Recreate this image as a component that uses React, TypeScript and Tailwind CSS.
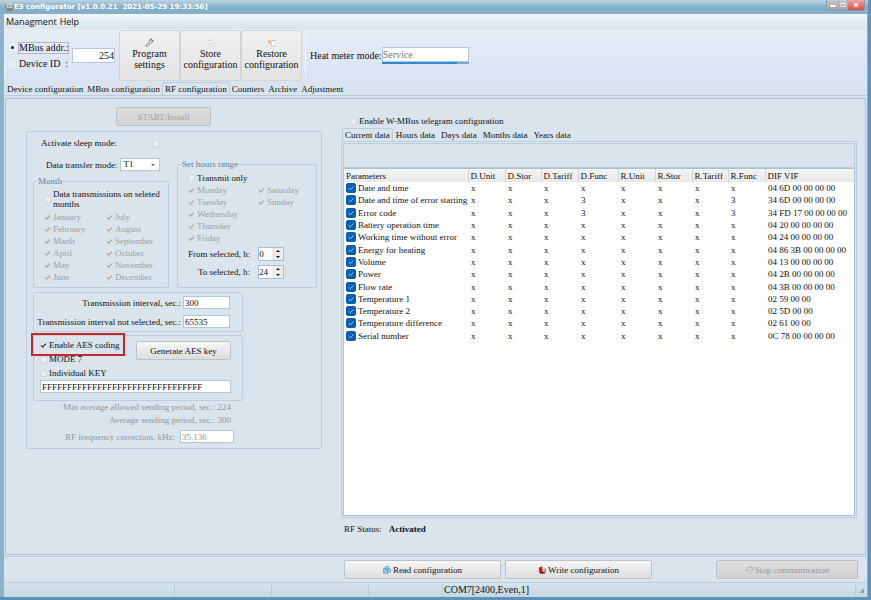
import React from "react";

const monthsLeft = ["January", "February", "Marth", "April", "May", "June"];
const monthsRight = [
  "July",
  "August",
  "September",
  "October",
  "November",
  "December",
];
const weekDays = ["Monday", "Tuesday", "Wednesday", "Thursday", "Friday"];
const weekend = ["Saturday", "Sunday"];

const columns = [
  { name: "Parameters", width: "w-[124px]" },
  { name: "D.Unit", width: "w-[37px]" },
  { name: "D.Stor", width: "w-[36px]" },
  { name: "D.Tariff", width: "w-[37px]" },
  { name: "D.Func", width: "w-[40px]" },
  { name: "R.Unit", width: "w-[37px]" },
  { name: "R.Stor", width: "w-[37px]" },
  { name: "R.Tariff", width: "w-[36px]" },
  { name: "R.Func", width: "w-[37px]" },
  { name: "DIF VIF", width: "" },
];

const parameters = [
  { name: "Date and time", func: "x", dif: "04 6D 00 00 00 00" },
  { name: "Date and time of error starting", func: "3", dif: "34 6D 00 00 00 00" },
  { name: "Error code", func: "3", dif: "34 FD 17 00 00 00 00" },
  { name: "Battery operation time", func: "x", dif: "04 20 00 00 00 00" },
  { name: "Working time without error", func: "x", dif: "04 24 00 00 00 00" },
  { name: "Energy for heating", func: "x", dif: "04 86 3B 00 00 00 00" },
  { name: "Volume", func: "x", dif: "04 13 00 00 00 00" },
  { name: "Power", func: "x", dif: "04 2B 00 00 00 00" },
  { name: "Flow rate", func: "x", dif: "04 3B 00 00 00 00" },
  { name: "Temperature 1", func: "x", dif: "02 59 00 00" },
  { name: "Temperature 2", func: "x", dif: "02 5D 00 00" },
  { name: "Temperature difference", func: "x", dif: "02 61 00 00" },
  { name: "Serial number", func: "x", dif: "0C 78 00 00 00 00" },
];

function Check({ label, checked, disabled, hideLabel }: any) {
  return (
    <label
      className={
        disabled
          ? "flex items-center gap-[2px] text-[#999fa3]"
          : "flex items-center gap-[2px]"
      }
    >
      <span className="grid shrink-0">
        <input
          type="checkbox"
          defaultChecked={checked}
          disabled={disabled}
          aria-label={hideLabel ? label : undefined}
          className="peer col-start-1 row-start-1 size-[7px] appearance-none rounded-[2px] border border-[#d6d8d9] bg-[#eeeeee] disabled:border-[#dcdfe1] disabled:bg-[#e2e1df]"
        />
        <svg
          viewBox="0 0 7 7"
          className="pointer-events-none invisible col-start-1 row-start-1 size-[7px] peer-checked:visible"
          fill="none"
          stroke={disabled ? "#aaa6a2" : "#222222"}
          strokeWidth="1.2"
        >
          <path d="M1.2 3.4 L2.8 5.2 L5.8 1.6" />
        </svg>
      </span>
      {!hideLabel && <span>{label}</span>}
    </label>
  );
}

function ParamCheck({ label }: any) {
  return (
    <label className="flex items-center gap-[2px]">
      <span className="grid shrink-0">
        <input
          type="checkbox"
          defaultChecked
          className="peer col-start-1 row-start-1 size-[10px] appearance-none rounded-[2px] border border-[#0a5cae] checked:bg-[#0560b8]"
        />
        <svg
          viewBox="0 0 10 10"
          className="pointer-events-none invisible col-start-1 row-start-1 size-[10px] peer-checked:visible"
          fill="none"
          stroke="#a9d2f5"
          strokeWidth="0.9"
        >
          <path d="M2.6 5.1 L4.3 6.7 L7.5 3.5" />
        </svg>
      </span>
      <span>{label}</span>
    </label>
  );
}

function Spinner({ id, value }: any) {
  return (
    <span className="flex h-[14px] w-[26px] border border-[#a9bfcd] bg-white">
      <input
        id={id}
        defaultValue={value}
        className="w-[13px] min-w-0 text-[9px] leading-[12px] outline-none"
      />
      <span className="flex flex-1 flex-col bg-[#ececec]">
        <button type="button" aria-label="Increase" className="grid h-[6px] place-items-center">
          <svg viewBox="0 0 4 2" className="h-[2px] w-[4px]">
            <path d="M0 2 L2 0 L4 2Z" fill="#111" />
          </svg>
        </button>
        <button type="button" aria-label="Decrease" className="grid h-[6px] place-items-center">
          <svg viewBox="0 0 4 2" className="h-[2px] w-[4px]">
            <path d="M0 0 L2 2 L4 0Z" fill="#111" />
          </svg>
        </button>
      </span>
    </span>
  );
}

function TitleBar() {
  return (
    <header className="flex h-[14px] items-start justify-between bg-linear-to-b from-[#bcd3e2] via-[#86b0ca] to-[#85aec9] pl-[5px] pr-[3px]">
      <div className="flex h-[14px] items-center">
        <svg viewBox="0 0 9 10" className="h-[10px] w-[9px]">
          <path d="M0.5 2h8v5l-1.5 2.5h-5L0.5 7z" fill="#8a8f92" />
          <path d="M1 0.8h7l0.5 2h-8z" fill="#c9cdd0" />
          <rect x="2" y="3" width="5" height="3" fill="#d5d8da" />
          <rect x="3" y="3.8" width="3" height="1" fill="#777" />
          <circle cx="4.5" cy="7.6" r="1" fill="#a3625c" />
        </svg>
        <h1 className="whitespace-pre font-['DejaVu_Sans'] text-[7px] font-bold leading-[14px] text-white">
          {"E3 configurator [v1.0.0.21  2021-05-29 19:33:56]"}
        </h1>
      </div>
      <div className="flex h-[11px] overflow-hidden rounded-b-[2px] border-x border-b border-[#8d9aa5]">
        <button type="button" aria-label="Minimize" className="grid w-[11px] place-items-center bg-linear-to-b from-[#c9cdd0] to-[#9c9fa2]">
          <svg viewBox="0 0 6 6" className="size-[6px]">
            <rect x="0.5" y="3" width="5" height="2" fill="#fff" />
          </svg>
        </button>
        <button type="button" aria-label="Maximize" className="grid w-[10px] place-items-center border-x border-[#a9afb4] bg-linear-to-b from-[#c9cdd0] to-[#9c9fa2]">
          <svg viewBox="0 0 6 6" className="size-[6px]">
            <rect x="1" y="1.5" width="4" height="3" fill="none" stroke="#e9eaeb" />
          </svg>
        </button>
        <button type="button" aria-label="Close" className="grid w-[16px] place-items-center bg-linear-to-b from-[#e9a3a3] to-[#d9484a]">
          <svg viewBox="0 0 6 6" className="size-[6px]" stroke="#fff" strokeWidth="1.4">
            <path d="M1.2 1.4 L4.8 4.8 M4.8 1.4 L1.2 4.8" />
          </svg>
        </button>
      </div>
    </header>
  );
}

function ToolButton({ icon, first, second }: any) {
  return (
    <button
      type="button"
      className="flex h-[51px] w-[61px] flex-col items-center rounded-[2px] border border-[#d0d4d8] bg-linear-to-b from-[#f1f1f1] to-[#e3e3e3] pt-[7px] text-[10px] leading-[11px]"
    >
      {icon}
      <span>{first}</span>
      <span>{second}</span>
    </button>
  );
}

function Toolbar() {
  return (
    <div className="flex h-[53px] items-center bg-linear-to-b from-[#e6edf4] via-[#dfe7f4] to-[#d8e4f4] text-[10px] leading-[12px]">
      <div className="flex h-[49px] w-[115px] items-center gap-[3px] border-l border-[#eef3f8] pl-[4px]">
        <div className="flex flex-col gap-[4px]">
          <label className="flex items-center gap-[2px]">
            <input
              type="radio"
              name="address"
              defaultChecked
              className="size-[7px] appearance-none rounded-full border-2 border-[#eeeeee] bg-[#eeeeee] checked:bg-[#222222]"
            />
            <span className="w-[51px] border border-[#b5b3cf] whitespace-pre leading-[10px]">MBus addr.:</span>
          </label>
          <label className="flex items-center gap-[3px]">
            <input
              type="radio"
              name="address"
              className="size-[7px] appearance-none rounded-full border-2 border-[#eeeeee] bg-[#e6e8ea] checked:bg-[#222222]"
            />
            <span className="whitespace-pre">{"Device ID  :"}</span>
          </label>
        </div>
        <input
          aria-label="MBus address"
          defaultValue="254"
          className="h-[15px] w-[43px] shrink-0 border border-[#b5c8d6] bg-white text-right text-[10px] outline-none"
        />
      </div>
      <ToolButton
        first="Program"
        second="settings"
        icon={
          <svg viewBox="0 0 10 10" className="mb-px size-[9px]" fill="none" stroke="#777" strokeWidth="1">
            <path d="M1 8 L5 4.2 Q4.6 2 6.4 1 L7.6 0.8 L6.6 2.4 L7.6 3.4 L9.2 2.4 Q9.2 5 6.6 5.4 L2.4 9.2 Q1 9.2 1 8Z" />
          </svg>
        }
      />
      <ToolButton
        first="Store"
        second="configuration"
        icon={
          <svg viewBox="0 0 10 10" className="mb-px size-[9px]" fill="none" strokeWidth="0.8">
            <path d="M2.5 2.5h5l1 1.5V9h-6z" fill="#f8f8f8" stroke="#dadcda" />
            <path d="M4 5.6h3.4M4 7.2h3.4" stroke="#c5d3c3" />
            <path d="M2.8 2.6h3.6" stroke="#a9d3a2" strokeWidth="1" />
          </svg>
        }
      />
      <ToolButton
        first="Restore"
        second="configuration"
        icon={
          <svg viewBox="0 0 10 10" className="mb-px size-[9px]" fill="none" strokeWidth="0.8">
            <path d="M4.8 3h3l1.2 1.2V9H4.8z" fill="#fafafa" stroke="#cfcfcf" />
            <path d="M0.8 2.8 L4.6 3.4 L3 6.4Z" fill="#efa04c" />
            <path d="M2.8 5.2 L5 8" stroke="#efa04c" />
            <path d="M6.2 2.8h2.4" stroke="#cf8a72" />
          </svg>
        }
      />
      <div className="ml-[3px] flex h-[49px] items-center border-l border-[#f3f6fa] pl-[4px]">
        <label htmlFor="mode">Heat meter mode:</label>
        <div className="flex w-[87px] flex-col">
          <input
            id="mode"
            defaultValue="Service"
            className="h-[15px] border border-[#b5c8d6] bg-white text-[10px] text-[#777777] outline-none"
          />
          <div className="h-[2px] bg-[#7fabcb]">
            <div className="h-[2px] w-[75px] bg-[#2f8bd2]" />
          </div>
        </div>
      </div>
    </div>
  );
}

function Tabs({ items, active, dense }: any) {
  return (
    <nav className="flex" role="tablist">
      {items.map((item: string) => (
        <button
          key={item}
          type="button"
          role="tab"
          aria-selected={item === active}
          className={
            item === active
              ? "-mb-px h-[14px] rounded-t-[2px] border border-b-0 border-[#b9cedc] bg-[#d9e4ec] px-[2px] pb-[2px]"
              : dense
                ? "h-[13px] px-[2px]"
                : "h-[13px] px-[3px]"
          }
        >
          {item}
        </button>
      ))}
    </nav>
  );
}

function TextField({ id, value, className, label }: any) {
  return (
    <input
      id={id}
      aria-label={label}
      defaultValue={value}
      className={
        "h-[13px] border border-[#b2c8d6] bg-white pl-px text-[9px] leading-[11px] outline-none " +
        className
      }
    />
  );
}

function MonthGroup() {
  return (
    <fieldset className="mt-[4px] h-[113px] rounded-[2px] border border-[#b9cfdd] pl-[10px] pt-[2px]">
      <legend className="-ml-[6px] text-[#5f8299]">Month</legend>
      <div className="mb-[2px] leading-[10px]">
        <Check
          label={
            <>
              Data transmissions on seleted
              <br />
              months
            </>
          }
        />
      </div>
      <div className="grid grid-cols-[62px_1fr]">
        <div>
          {monthsLeft.map((month) => (
            <Check key={month} label={month} checked disabled />
          ))}
        </div>
        <div>
          {monthsRight.map((month) => (
            <Check key={month} label={month} checked disabled />
          ))}
        </div>
      </div>
    </fieldset>
  );
}

function HoursGroup() {
  return (
    <fieldset className="h-[130px] w-[140px] rounded-[2px] border border-[#b9cfdd] pl-[10px] pt-[2px]">
      <legend className="-ml-[6px] text-[#5f8299]">Set hours range</legend>
      <Check label="Transmit only" />
      <div className="grid grid-cols-[70px_1fr]">
        <div>
          {weekDays.map((day) => (
            <Check key={day} label={day} checked disabled />
          ))}
        </div>
        <div>
          {weekend.map((day) => (
            <Check key={day} label={day} checked disabled />
          ))}
        </div>
      </div>
      <div className="mt-[3px] flex w-[96px] flex-col gap-[4px] whitespace-nowrap">
        <div className="flex items-center justify-end gap-[8px]">
          <label htmlFor="from">From selected, h:</label>
          <Spinner id="from" value="0" />
        </div>
        <div className="flex items-center justify-end gap-[8px]">
          <label htmlFor="to">To selected, h:</label>
          <Spinner id="to" value="24" />
        </div>
      </div>
    </fieldset>
  );
}

function RadioSettings() {
  return (
    <section className="ml-[20px] w-[296px] shrink-0 pt-[8px]">
      <button
        type="button"
        disabled
        className="mb-[5px] ml-[90px] block h-[19px] w-[95px] rounded-[2px] border border-[#bfbfbf] bg-linear-to-b from-[#dedede] to-[#d2d2d2] text-[#a0a0a0]"
      >
        START/Install
      </button>
      <div className="rounded-[2px] border border-[#b9cfdd] pb-[5px] pl-[6px]">
        <div className="flex items-end gap-[8px]">
          <div className="w-[136px]">
            <div className="mt-[5px] flex items-center pl-[8px]">
              <span className="w-[111px]">Activate sleep mode:</span>
              <Check label="Activate sleep mode" hideLabel />
            </div>
            <div className="mt-[9px] flex items-center gap-[3px] pl-[13px]">
              <label htmlFor="transfer">Data transfer mode:</label>
              <div className="grid w-[40px] items-center">
                <select
                  id="transfer"
                  className="col-start-1 row-start-1 h-[13px] appearance-none border border-[#b2c8d6] bg-white pl-[2px] text-[9px] leading-[11px]"
                >
                  <option>T1</option>
                </select>
                <svg
                  viewBox="0 0 4 2"
                  className="pointer-events-none col-start-1 row-start-1 mr-[5px] h-[2px] w-[4px] justify-self-end"
                >
                  <path d="M0 0 L2 2 L4 0Z" fill="#4c6b80" />
                </svg>
              </div>
            </div>
            <MonthGroup />
          </div>
          <HoursGroup />
        </div>

        <div className="mt-[4px] flex w-[210px] flex-col gap-[6px] rounded-[2px] border border-[#b9cfdd] py-[3px] pr-[12px]">
          <div className="flex items-center justify-end gap-[2px]">
            <label htmlFor="interval">Transmission interval, sec.:</label>
            <TextField id="interval" value="300" className="w-[47px]" />
          </div>
          <div className="flex items-center justify-end gap-[2px]">
            <label htmlFor="interval-not">Transmission interval not selected, sec.:</label>
            <TextField id="interval-not" value="65535" className="w-[47px]" />
          </div>
        </div>

        <div className="relative mt-[3px] w-[210px] rounded-[2px] border border-[#b9cfdd] pb-[7px] pl-[6px] pr-[11px] pt-[3px]">
          <div className="flex justify-between">
            <div className="flex flex-col gap-[2px]">
              <Check label="Enable AES coding" checked />
              <Check label="MODE 7" />
              <Check label="Individual KEY" />
            </div>
            <button
              type="button"
              className="mt-[2px] h-[19px] w-[95px] rounded-[2px] border border-[#b5c5d0] bg-linear-to-b from-[#f6f6f6] to-[#dddddd]"
            >
              Generate AES key
            </button>
          </div>
          <TextField
            id="key"
            label="AES key"
            value="FFFFFFFFFFFFFFFFFFFFFFFFFFFFFFFF"
            className="mt-px w-full"
          />
          <div className="pointer-events-none absolute -left-[3px] -top-[3px] h-[23px] w-[94px] border-2 border-[#c5282c]" />
        </div>

        <div className="flex w-[201px] flex-col text-right text-[#8f979c]">
          <p className="w-[198px] leading-[13px]">Min average allowed sending period, sec.: 224</p>
          <p className="w-[198px] leading-[13px]">Average sending period, sec.: 300</p>
          <div className="mt-[3px] flex items-center justify-end gap-[5px]">
            <label htmlFor="correction">RF frequency correction, kHz:</label>
            <TextField id="correction" value="35,136" className="w-[54px]" />
          </div>
        </div>
      </div>
    </section>
  );
}

function Telegram() {
  return (
    <section className="ml-[19px] mr-[8px] flex flex-1 flex-col pt-[16px]">
      <div className="mb-px ml-[9px] flex">
        <Check label="Enable W-MBus telegram configuration" />
      </div>
      <div className="pl-px">
        <Tabs
          items={["Current data", "Hours data", "Days data", "Months data", "Years data"]}
          active="Current data"
        />
      </div>
      <div className="flex flex-1 flex-col border border-[#b9cfdd] p-px">
        <div className="h-[25px] border border-[#b9cfdd]" />
        <div className="flex-1 border border-[#a9c2d2] bg-white">
          <table className="h-[173px] w-full table-fixed border-collapse text-left">
            <thead>
              <tr className="h-[13px] bg-linear-to-b from-[#f4f4f4] to-[#e9e9e9]">
                {columns.map((column) => (
                  <th
                    key={column.name}
                    className={
                      "border-r border-[#d4d4d4] p-0 pl-[2px] font-normal last:border-r-0 " +
                      column.width
                    }
                  >
                    {column.name}
                  </th>
                ))}
              </tr>
            </thead>
            <tbody>
              {parameters.map((row) => (
                <tr key={row.name}>
                  <td className="whitespace-nowrap p-0 pl-[2px]">
                    <ParamCheck label={row.name} />
                  </td>
                  <td className="p-0 pl-[3px]">x</td>
                  <td className="p-0 pl-[3px]">x</td>
                  <td className="p-0 pl-[3px]">x</td>
                  <td className="p-0 pl-[3px]">{row.func}</td>
                  <td className="p-0 pl-[3px]">x</td>
                  <td className="p-0 pl-[3px]">x</td>
                  <td className="p-0 pl-[3px]">x</td>
                  <td className="p-0 pl-[3px]">{row.func}</td>
                  <td className="p-0 pl-[3px]">{row.dif}</td>
                </tr>
              ))}
            </tbody>
          </table>
        </div>
      </div>
      <p className="mb-[19px] mt-[5px] flex gap-[7px] pl-[3px]">
        <span>RF Status:</span>
        <b>Activated</b>
      </p>
    </section>
  );
}

function Actions() {
  return (
    <div className="flex h-[25px] items-center gap-[4px] pl-[340px] pr-[9px]">
      <button
        type="button"
        className="flex h-[19px] w-[157px] items-center justify-center gap-[2px] rounded-[2px] border border-[#b5c5d0] bg-linear-to-b from-[#f6f6f6] to-[#dddddd]"
      >
        <svg viewBox="0 0 9 9" className="size-[8px]" fill="#cfe8fb" stroke="#2f83c9" strokeWidth="0.9">
          <path d="M0.8 3h4.4v5H0.8z" />
          <path d="M3 0.8h3v3H3z" />
          <path d="M5.2 3.2h3v3.6h-3z" />
          <path d="M2 5.4h2" />
        </svg>
        Read configuration
      </button>
      <button
        type="button"
        className="flex h-[19px] w-[147px] items-center justify-center gap-[2px] rounded-[2px] border border-[#b5c5d0] bg-linear-to-b from-[#f6f6f6] to-[#dddddd]"
      >
        <svg viewBox="0 0 9 9" className="size-[8px]">
          <path d="M0.8 2 L4.6 0.4 L5.4 6.2 L1.4 6.8Z" fill="#e31219" />
          <path d="M1 6.4 L5.4 6 L8 8.4 L2.6 8.6Z" fill="#8e1216" />
          <path d="M8 2.8 V7.6 L6.4 8.2" fill="none" stroke="#444" strokeWidth="1" />
        </svg>
        Write configuration
      </button>
      <button
        type="button"
        disabled
        className="ml-auto flex h-[19px] w-[142px] items-center justify-center gap-[2px] rounded-[2px] border border-[#bcc0c2] bg-linear-to-b from-[#dedede] to-[#d2d2d2] text-[#999999]"
      >
        <svg viewBox="0 0 9 9" className="size-[8px]" fill="none" stroke="#a9a9a9" strokeWidth="0.9">
          <path d="M3 1.2h5v5.4L6 8H4.6" />
          <path d="M0.6 4.6h4.6M3 2.8 L1 4.6 L3 6.4" />
        </svg>
        Stop communication
      </button>
    </div>
  );
}

export default function App() {
  return (
    <main className="flex min-h-screen flex-col border-b-[3px] border-r-[3px] border-[#5f92b8] bg-[#8db2cb] font-['Liberation_Serif',serif] text-[9px] leading-[12px] text-[#111111]">
      <TitleBar />
      <div className="ml-[4px] mr-px flex flex-1 flex-col bg-[#d9e4ec]">
        <nav className="flex h-[15px] items-center gap-[3px] bg-linear-to-b from-[#f2f6f9] to-[#d9e4ec] pl-[2px] font-['Open_Sans',sans-serif] text-[9px]">
          <button type="button">Managment</button>
          <button type="button">Help</button>
        </nav>
        <Toolbar />
        <div className="pl-px">
          <Tabs
            items={[
              "Device configuration",
              "MBus configuration",
              "RF configuration",
              "Counters",
              "Archive",
              "Adjustment",
            ]}
            active="RF configuration"
            dense
          />
        </div>
        <div className="flex flex-1 border-y border-[#b9cbd8] pb-px pt-[2px]">
          <div className="mx-px flex flex-1 border border-[#a9c2d2]">
            <RadioSettings />
            <Telegram />
          </div>
        </div>
        <Actions />
        <footer className="flex h-[15px] items-center border-t border-[#b9cbd8] bg-linear-to-b from-[#d5e3ec] to-[#c5d7e2] text-[10px]">
          <span className="h-[12px] w-[171px] border-r border-[#b9cbd8]" />
          <span className="h-[12px] w-[97px] border-r border-[#b9cbd8]" />
          <span className="h-[12px] w-[97px] border-r border-[#b9cbd8]" />
          <span className="h-[12px] w-[74px] border-r border-[#b9cbd8]" />
          <span className="flex-1 pl-px">COM7[2400,Even,1]</span>
          <span className="flex h-[12px] w-[12px] items-center justify-center border-l border-[#b9cbd8]">
            <svg viewBox="0 0 5 5" className="size-[5px]">
              <path d="M5 0 V5 H0Z" fill="#8ba9bd" />
            </svg>
          </span>
        </footer>
      </div>
    </main>
  );
}
